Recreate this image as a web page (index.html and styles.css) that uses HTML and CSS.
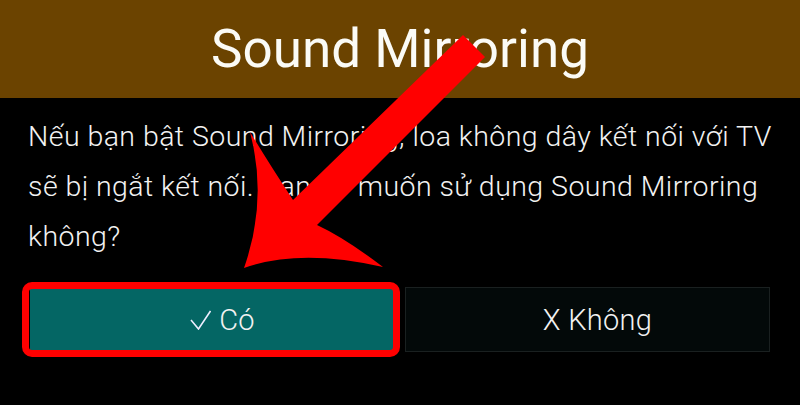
FILE: index.html
```html
<!DOCTYPE html>
<html lang="vi">
<head>
<meta charset="utf-8">
<title>Sound Mirroring</title>
<link rel="stylesheet" href="styles.css">
</head>
<body>
<div class="dialog">
  <header class="dialog-header">
    <h1 class="dialog-title">Sound Mirroring</h1>
  </header>
  <div class="dialog-body">
    <p class="dialog-message">Nếu bạn bật Sound Mirroring, loa không dây kết nối với TV sẽ bị ngắt kết nối. Bạn có muốn sử dụng Sound Mirroring không?</p>
    <div class="dialog-actions">
      <button class="btn btn-yes">
        <svg class="check" width="21" height="20" viewBox="0 0 21 20"><polyline points="1,10 8.5,19 20.5,1" fill="none" stroke="#eef" stroke-width="1.6"/></svg>
        <span>Có</span>
      </button>
      <button class="btn btn-no"><span>X Không</span></button>
    </div>
  </div>
  <div class="highlight"></div>
  <svg class="arrow" width="800" height="405" viewBox="0 0 800 405">
    <path d="M463 35 L293 200 Q268 162 250 132 Q268 200 244 268 Q300 248 383 267 Q345 238 317 225 L485 57 Z" fill="#ff0000"/>
  </svg>
</div>
</body>
</html>
```
FILE: styles.css
```css
html, body {
  margin: 0;
  padding: 0;
  background: #000;
}
.dialog {
  position: relative;
  width: 800px;
  height: 405px;
  overflow: hidden;
  background: #000;
  font-family: Roboto, "Noto Sans", sans-serif;
  color: #f2f2f2;
}
.dialog-header {
  height: 98px;
  background: #6b4300;
  display: flex;
  align-items: center;
  justify-content: center;
}
.dialog-title {
  margin: 0;
  font-size: 53px;
  font-weight: 400;
  color: #fbfbf6;
  line-height: normal;
}
.dialog-body {
  padding: 14px 28px 0 28px;
}
.dialog-message {
  margin: 0;
  font-size: 28.5px;
  font-weight: 300;
  line-height: 50px;
  letter-spacing: 0.45px;
}
.dialog-actions {
  margin-top: 25px;
  display: grid;
  grid-template-columns: 1fr 1fr;
  gap: 10px;
  padding: 0 2px;
}
.btn {
  height: 65px;
  border: 1px solid #1a2020;
  font-family: Roboto, "Noto Sans", sans-serif;
  font-size: 29px;
  font-weight: 300;
  letter-spacing: 0.3px;
  color: #f2f2f2;
  display: flex;
  align-items: center;
  justify-content: center;
  gap: 8px;
  padding: 0 0 0 20px;
}
.btn-yes {
  background: #046664;
  border-color: #046664;
}
.btn-no {
  background: #030909;
}
.check {
  display: block;
}
.highlight {
  position: absolute;
  left: 22px;
  top: 282px;
  width: 364px;
  height: 61px;
  border: 7px solid #ff0000;
  border-radius: 10px;
}
.arrow {
  position: absolute;
  left: 0;
  top: 0;
}
```
